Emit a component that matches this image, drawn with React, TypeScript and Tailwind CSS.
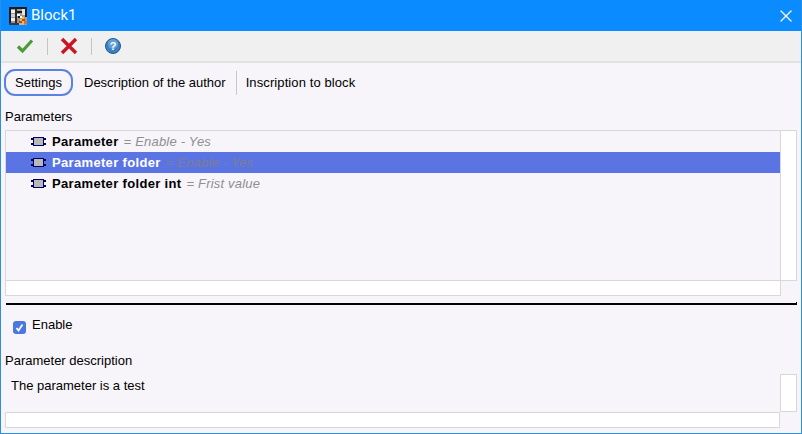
import React from 'react';
import { X } from 'lucide-react';

const font = { fontFamily: '"Liberation Sans", Arial, sans-serif' };

const AppIcon = () => (
  <svg width="18" height="18" viewBox="0 0 18 18" shapeRendering="crispEdges">
    <rect width="18" height="18" fill="#9a9a9a" />
    <rect x="0" y="0" width="18" height="2" fill="#1c1c1c" />
    <rect x="0" y="2" width="2" height="14" fill="#1c1c1c" />
    <rect x="2" y="3" width="4" height="3" fill="#f0f0f0" />
    <rect x="2" y="7" width="4" height="3" fill="#d0d0d0" />
    <rect x="2" y="11" width="4" height="3" fill="#f0f0f0" />
    <rect x="6" y="2" width="2" height="14" fill="#2a2a2a" />
    <rect x="8" y="4" width="5" height="2" fill="#1c1c1c" />
    <rect x="13" y="2" width="3" height="6" fill="#e4e4e4" />
    <rect x="16" y="2" width="2" height="8" fill="#1c1c1c" />
    <rect x="8" y="7" width="3" height="2" fill="#ffffff" />
    <rect x="9" y="9" width="3" height="2" fill="#1c1c1c" />
    <rect x="11" y="9" width="2" height="2" fill="#ffffff" />
    <rect x="0" y="16" width="10" height="2" fill="#3a3a3a" />
    <rect x="13" y="10" width="2" height="2" fill="#f2c81e" />
    <rect x="11" y="12" width="2" height="2" fill="#f2c81e" />
    <rect x="13" y="12" width="3" height="2" fill="#d9341f" />
    <rect x="10" y="14" width="3" height="2" fill="#d9341f" />
    <rect x="13" y="14" width="2" height="2" fill="#f2c81e" />
    <rect x="15" y="14" width="3" height="3" fill="#e0701a" />
    <rect x="10" y="16" width="5" height="2" fill="#b8b8b8" />
  </svg>
);

const Chip = () => (
  <svg width="15" height="9" viewBox="0 0 15 9" shapeRendering="crispEdges" className="shrink-0">
    <rect x="2" y="0" width="11" height="9" fill="#000060" />
    <rect x="3" y="1" width="9" height="7" fill="#b8b8b8" />
    <rect x="0" y="1" width="2" height="2" fill="#000060" />
    <rect x="0" y="6" width="2" height="2" fill="#000060" />
    <rect x="13" y="1" width="2" height="2" fill="#000060" />
    <rect x="13" y="6" width="2" height="2" fill="#000060" />
  </svg>
);

const Divider = () => <div className="h-[17px] w-px bg-[#c4c4c4]" />;

const rows = [
  { name: 'Parameter', value: 'Enable - Yes', selected: false },
  { name: 'Parameter folder', value: 'Enable - Yes', selected: true },
  { name: 'Parameter folder int', value: 'Frist value', selected: false },
];

export default function App() {
  return (
    <div
      style={font}
      className="flex h-[434px] w-[802px] flex-col overflow-hidden border-x border-b border-[#2a8fe0] bg-[#f7f5f9] text-[13px] text-black"
    >
      {/* title bar */}
      <div className="flex h-[31px] shrink-0 items-center bg-[#0a8bff] pl-[8px] pr-[5px] text-white">
        <AppIcon />
        <span className="ml-[4px] text-[15px] [font-family:Roboto,sans-serif]">Block1</span>
        <X size={20} strokeWidth={1.5} className="ml-auto" />
      </div>

      {/* toolbar */}
      <div className="flex h-[32px] shrink-0 items-center border-b-2 border-[#e2e2e2] bg-[#f0f0f0] pl-[15px]">
        <svg width="18" height="16" viewBox="0 0 18 16">
          <path d="M2 8.5 L6.5 13 L16 2.5" fill="none" stroke="#4c9a3a" strokeWidth="3.2" />
        </svg>
        <div className="ml-[13px]"><Divider /></div>
        <svg width="18" height="18" viewBox="0 0 18 18" className="ml-[12px]">
          <path d="M2 2 L16 16 M16 2 L2 16" fill="none" stroke="#cc1522" strokeWidth="3.4" />
        </svg>
        <div className="ml-[13px]"><Divider /></div>
        <svg width="16" height="16" viewBox="0 0 16 16" className="ml-[13px]">
          <circle cx="8" cy="8" r="7.5" fill="#3b82c4" stroke="#24578f" strokeWidth="1" />
          <circle cx="8" cy="6" r="5" fill="#7fb2e0" opacity="0.6" />
          <text x="8" y="12" textAnchor="middle" fontSize="11" fontWeight="700" fill="#ffffff" style={font}>?</text>
        </svg>
      </div>

      {/* tabs */}
      <div className="mt-[6px] flex h-[27px] shrink-0 items-center pl-[3px]">
        <div className="flex h-[27px] w-[69px] items-center justify-center rounded-[11px] border-2 border-[#5b82e2] pt-[1px]">
          Settings
        </div>
        <span className="ml-[11px] pt-[1px]">Description of the author</span>
        <div className="ml-[10px] h-[24px] w-px bg-[#c8c8c8]" />
        <span className="ml-[9px] pt-[1px] tracking-[0.1px]">Inscription to block</span>
      </div>

      {/* parameters */}
      <div className="mt-[13px] h-[14px] shrink-0 pl-[4px] leading-[16px]">Parameters</div>

      <div className="ml-[4px] mr-[4px] mt-[7px] flex h-[166px] shrink-0">
        <div className="flex w-[776px] flex-col">
          <div className="h-[151px] border-x border-t border-[#d8d8d8]">
            {rows.map((r) => (
              <div
                key={r.name}
                className={`flex h-[21px] items-center pl-[25px] ${r.selected ? 'bg-[#5b74e4]' : ''}`}
              >
                <Chip />
                <span className={`ml-[6px] pt-[1px] font-bold tracking-[0.33px] ${r.selected ? 'text-white' : 'text-black'}`}>{r.name}</span>
                <span className={`ml-[5px] pt-[1px] italic tracking-[0.2px] ${r.selected ? 'text-[#7d7d90]' : 'text-[#8f8f8f]'}`}>= {r.value}</span>
              </div>
            ))}
          </div>
          <div className="h-[16px] border border-[#d8d8d8] bg-white" />
        </div>
        <div className="h-[151px] w-[16px] border-y border-r border-[#d8d8d8] bg-white" />
      </div>

      {/* splitter */}
      <div className="ml-[5px] mr-[4px] mt-[6px] h-[3px] shrink-0 border-r border-black">
        <div className="mt-[1px] h-[2px] bg-black" />
      </div>

      {/* enable */}
      <div className="ml-[12px] mt-[12px] flex h-[18px] shrink-0 items-start">
        <div className="mt-[4px] flex h-[13px] w-[13px] items-center justify-center rounded-[3px] bg-[#4a78e0]">
          <svg width="9" height="9" viewBox="0 0 9 9">
            <path d="M1.5 5 L3.5 7.5 L7.5 1.5" fill="none" stroke="#ffffff" strokeWidth="1.7" />
          </svg>
        </div>
        <span className="ml-[6px] leading-[16px]">Enable</span>
      </div>

      <div className="mt-[18px] h-[14px] shrink-0 pl-[4px] leading-[16px]">Parameter description</div>

      <div className="ml-[4px] mr-[4px] flex h-[61px] shrink-0 flex-col">
        <div className="flex h-[45px]">
          <div className="w-[775px] pl-[6px] pt-[11px] leading-[16px]">The parameter is a test</div>
          <div className="mt-[7px] h-[38px] w-[17px] border border-[#d8d8d8] bg-white" />
        </div>
        <div className="h-[16px] w-[775px] border border-[#d8d8d8] bg-white" />
      </div>
    </div>
  );
}
